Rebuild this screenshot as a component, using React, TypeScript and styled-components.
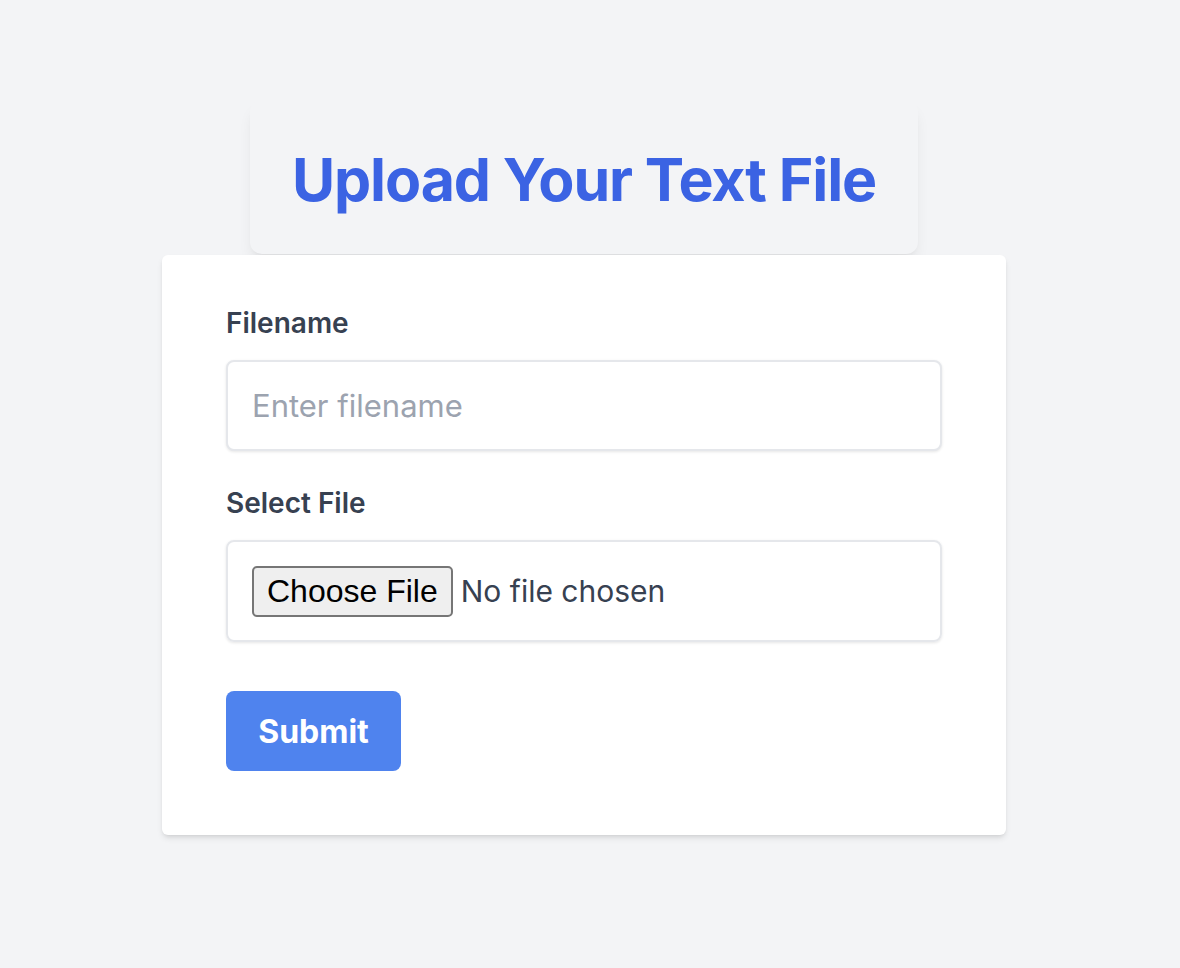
import React from 'react';
import styled, { createGlobalStyle } from 'styled-components';

const GlobalStyle = createGlobalStyle`
  html, body {
    margin: 0;
    padding: 0;
    background: #f3f4f6;
    font-family: Inter, "Noto Sans", sans-serif;
  }
`;

export default function App() {
  return (
    <>
      <GlobalStyle />
      <Page>
        <Header>
          <Title>Upload Your Text File</Title>
        </Header>
        <Card onSubmit={(e) => e.preventDefault()}>
          <Field>
            <Label htmlFor="filename">Filename</Label>
            <TextInput id="filename" type="text" placeholder="Enter filename" />
          </Field>
          <Field>
            <Label htmlFor="file">Select File</Label>
            <FileBox>
              <FileInput id="file" type="file" accept=".txt" />
            </FileBox>
          </Field>
          <SubmitButton type="submit">Submit</SubmitButton>
        </Card>
      </Page>
    </>
  );
}

const Page = styled.div`
  display: flex;
  flex-direction: column;
  align-items: center;
  min-height: 968px;
  box-sizing: border-box;
  padding: 100px 12px 0 0;
`;

const Header = styled.div`
  box-sizing: border-box;
  height: 154px;
  padding: 5px 42px 0;
  display: flex;
  align-items: center;
  background: #f3f4f6;
  border-radius: 12px;
  box-shadow: 0 10px 15px -3px rgba(0, 0, 0, 0.08), 0 4px 6px -4px rgba(0, 0, 0, 0.06);
`;

const Title = styled.h1`
  margin: 0;
  font-size: 59px;
  font-weight: 700;
  line-height: 72px;
  color: #3b63e3;
  letter-spacing: -1.1px;
`;

const Card = styled.form`
  box-sizing: border-box;
  width: 844px;
  margin-top: 1px;
  padding: 48px 64px 64px;
  background: #ffffff;
  border-radius: 6px;
  box-shadow: 0 4px 6px -1px rgba(0, 0, 0, 0.1), 0 2px 4px -2px rgba(0, 0, 0, 0.1);
  display: flex;
  flex-direction: column;
  align-items: flex-start;
`;

const Field = styled.div`
  width: 716px;
  margin-bottom: 32px;
  &:last-of-type {
    margin-bottom: 49px;
  }
`;

const Label = styled.label`
  display: block;
  font-size: 28px;
  line-height: 40px;
  font-weight: 600;
  color: #374151;
  margin-bottom: 17px;
`;

const TextInput = styled.input`
  box-sizing: border-box;
  width: 100%;
  height: 91px;
  padding: 0 24px;
  border: 2px solid #e5e7eb;
  border-radius: 8px;
  box-shadow: 0 1px 3px rgba(0, 0, 0, 0.1);
  font-family: Inter, sans-serif;
  font-size: 31px;
  color: #374151;
  outline: none;
  &::placeholder {
    color: #9ca3af;
  }
`;

const FileBox = styled.div`
  box-sizing: border-box;
  width: 100%;
  height: 102px;
  padding: 0 24px;
  display: flex;
  align-items: center;
  border: 2px solid #e5e7eb;
  border-radius: 8px;
  box-shadow: 0 1px 3px rgba(0, 0, 0, 0.1);
`;

const FileInput = styled.input`
  font-family: Inter, sans-serif;
  font-size: 30px;
  color: #374151;
  &::file-selector-button {
    box-sizing: border-box;
    height: 51px;
    margin-right: 8px;
    padding: 0 13px;
    font-family: "Liberation Sans", Arial, sans-serif;
    font-size: 32px;
    color: #000;
    background: #efefef;
    border: 2px solid #767676;
    border-radius: 5px;
  }
`;

const SubmitButton = styled.button`
  box-sizing: border-box;
  width: 175px;
  height: 80px;
  border: none;
  border-radius: 8px;
  background: #4f83ee;
  color: #ffffff;
  font-family: Inter, sans-serif;
  font-size: 32px;
  font-weight: 700;
  cursor: pointer;
`;
